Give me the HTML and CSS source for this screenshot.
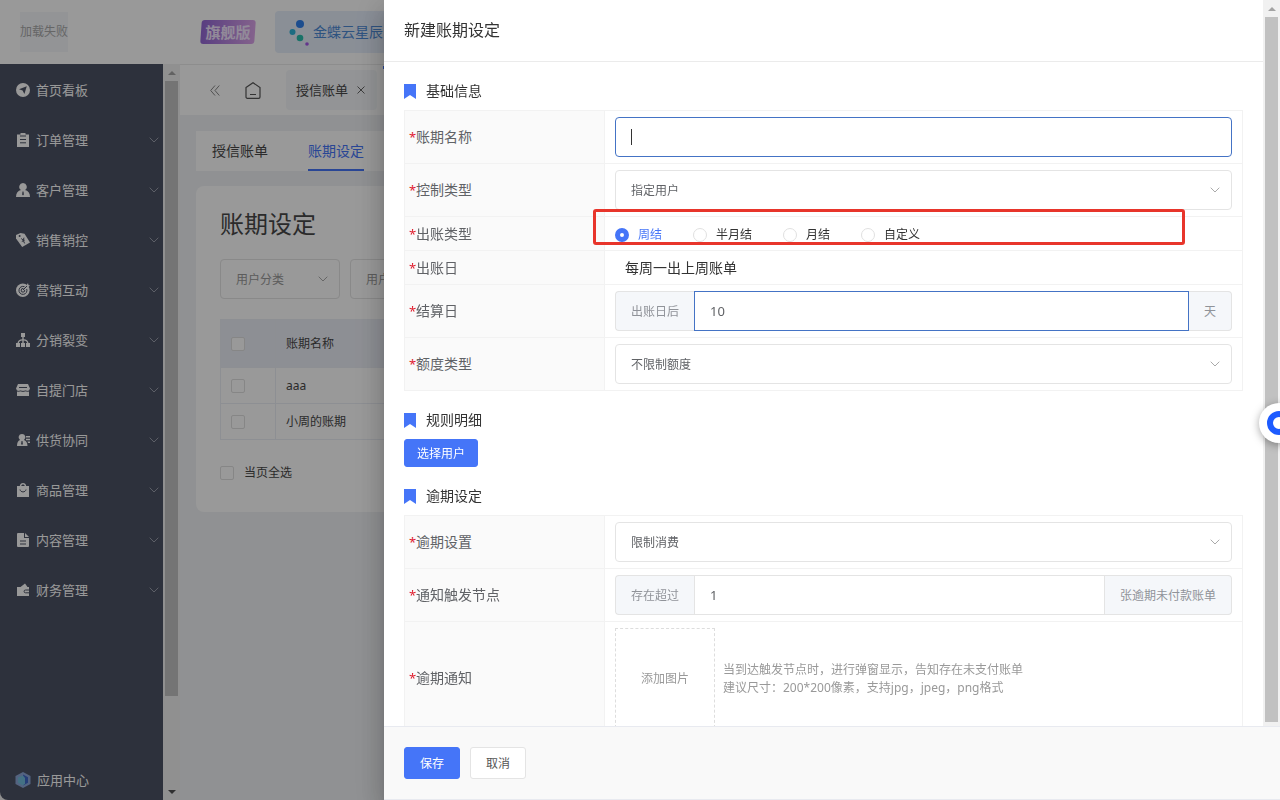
FILE: index.html
```
<!DOCTYPE html>
<html lang="zh-CN">
  <head>
    <meta charset="UTF-8" />
    <meta name="viewport" content="width=device-width, initial-scale=1.0" />
    <title>新建账期设定</title>
    <link rel="stylesheet" href="styles.css" />
  </head>
  <body>
    <svg class="sprite" aria-hidden="true">
      <symbol id="arrow" viewBox="0 0 10 6">
        <path d="M.7.7 5 5 9.3.7" fill="none" stroke="currentColor" />
      </symbol>
      <symbol id="bookmark" viewBox="0 0 12 15">
        <path d="M0 0h12v15l-6-4-6 4z" fill="#4575f8" />
      </symbol>
    </svg>

    <div class="app">
      <header class="topbar">
        <div class="logo">加载失败</div>
        <span class="edition"><b>旗舰版</b></span>
        <a class="kingdee" href="#">
          <svg width="20" height="27" viewBox="0 0 20 27">
            <circle cx="11" cy="5" r="4" fill="#2f80ed" />
            <circle cx="3.500" cy="13" r="3" fill="#2fb4d8" />
            <circle cx="11" cy="19" r="3.300" fill="#2bbfae" />
            <circle cx="18" cy="25" r="1.800" fill="#a65bea" />
          </svg>
          金蝶云星辰
        </a>
      </header>

      <div class="layout">
        <nav class="sidebar">
          <a href="#">
            <svg class="ico" viewBox="0 0 14 14"><circle cx="7" cy="7" r="7" /><path class="cut" d="M10.800 3.200 8.400 11 6.600 7.600 3 6.200z" /></svg>
            <span>首页看板</span>
          </a>
          <a href="#">
            <svg class="ico" viewBox="0 0 14 14"><path d="M1 1.500h3.500V0h5v1.500H13V14H1z" /><path class="line" d="M4 3h6M4 6.500h6M4 9.800h6" /></svg>
            <span>订单管理</span><svg class="more"><use href="#arrow" /></svg>
          </a>
          <a href="#">
            <svg class="ico" viewBox="0 0 14 14"><path d="M7 0a3.800 3.800 0 0 1 2 7c3 .8 5 3 5 7H0c0-4 2-6.200 5-7a3.800 3.800 0 0 1 2-7z" /><path class="cut" d="M6.500 8.500h1l.4 3L7 12.500l-.9-1z" /></svg>
            <span>客户管理</span><svg class="more"><use href="#arrow" /></svg>
          </a>
          <a href="#">
            <svg class="ico" viewBox="0 0 14 14"><path d="M0 2 4.500 0l4 .8L14 9.500 6.200 14 0 5.500z" /><circle class="cut" cx="3.600" cy="3" r="1" /><path class="line" d="m5.200 5.500 2 1.700.8-2.500M7.200 7.200l1.400 3.200M5.800 8.500l3-1.500" /></svg>
            <span>销售销控</span><svg class="more"><use href="#arrow" /></svg>
          </a>
          <a href="#">
            <svg class="ico" viewBox="0 0 14 14"><circle cx="6.800" cy="7.200" r="6.800" /><path d="m8 6 4-6 .5 2 1.500.5-4 4z" /><path class="line" d="M8.500 3.700A4 4 0 1 0 10.700 6M7.500 5.600a1.800 1.800 0 1 0 1.200 1.300M7 7l4-4" /></svg>
            <span>营销互动</span><svg class="more"><use href="#arrow" /></svg>
          </a>
          <a href="#">
            <svg class="ico" viewBox="0 0 14 14"><path d="M5 0h4v4H7.700v2.200c2.700.2 4.500 1.500 4.800 3.800H14v4h-4v-4h1.200c-.3-1.500-1.500-2.300-3.500-2.500V10H9v4H5v-4h1.300V7.500c-2 .2-3.200 1-3.500 2.500H4v4H0v-4h1.500c.3-2.300 2.100-3.600 4.800-3.800V4H5z" /></svg>
            <span>分销裂变</span><svg class="more"><use href="#arrow" /></svg>
          </a>
          <a href="#">
            <svg class="ico" viewBox="0 0 14 14"><path d="M2 1h10l2 4.500-1 2V13H1V7.500l-1-2z" /><path class="line" d="M3 4.500h8M1 8c2 1 3-.5 4 0s3 .5 4 0 2 1 4 0" /></svg>
            <span>自提门店</span><svg class="more"><use href="#arrow" /></svg>
          </a>
          <a href="#">
            <svg class="ico" viewBox="0 0 14 14"><path d="M6 1a3.300 3.300 0 0 1 2 6c2 .8 3.500 2.500 3.500 6H1c0-3.500 1-5.200 3-6a3.300 3.300 0 0 1 2-6zM10 3h4v1.400h-4zM10 5.800h4v1.400h-4zM11.500 8.600H14V10h-2z" /><path class="cut" d="M5.500 8h1l.4 3-.9 1-.9-1z" /></svg>
            <span>供货协同</span><svg class="more"><use href="#arrow" /></svg>
          </a>
          <a href="#">
            <svg class="ico" viewBox="0 0 14 14"><path d="M1 3h2.800C4 1.200 5.300 0 7 0s3 1.200 3.200 3H13v11H1zm4.200 0h3.600C8.600 2 8 1.400 7 1.400S5.400 2 5.200 3z" fill-rule="evenodd" /><path class="line" d="M4 6.500c.5 3.200 5.500 3.200 6 0" /></svg>
            <span>商品管理</span><svg class="more"><use href="#arrow" /></svg>
          </a>
          <a href="#">
            <svg class="ico" viewBox="0 0 14 14"><path d="M2 0h6v5h5v8a1 1 0 0 1-1 1H2a1 1 0 0 1-1-1V1a1 1 0 0 1 1-1zm7 0 4 4H9z" /><path class="line" d="M4 8h6M4 11h6" /></svg>
            <span>内容管理</span><svg class="more"><use href="#arrow" /></svg>
          </a>
          <a href="#">
            <svg class="ico" viewBox="0 0 14 14"><path d="M1 4h3.500L9 .5 11.500 4H13v9H1z" /><path class="line" d="M13 7H9.500a1.300 1.300 0 0 0 0 2.800H13" /></svg>
            <span>财务管理</span><svg class="more"><use href="#arrow" /></svg>
          </a>
          <a class="app-center" href="#">
            <svg width="16" height="16" viewBox="0 0 16 16">
              <path d="m8 0 7.500 4v8L8 16 .5 12V4z" fill="#8ca6d6" />
              <path d="m8 2.500 5 2.700v5.600l-5 2.700z" fill="#3f66c8" />
              <path d="m8 3.500-5 2v5.300l5 2.700 2-2V6z" fill="#72bcdc" />
            </svg>
            <span>应用中心</span>
          </a>
        </nav>

        <div class="scrollbar scrollbar-side">
          <i class="up"></i><i class="thumb"></i><i class="down"></i>
        </div>

        <main class="content">
          <div class="page-tabs">
            <svg class="collapse" width="10" height="11" viewBox="0 0 10 11"><path d="M5 .5.7 5.500 5 10.500M9.300.5 5 5.500l4.300 5" fill="none" stroke="#888" /></svg>
            <svg class="home" width="16" height="17" viewBox="0 0 16 17"><path d="M1 5.500 8 .7l7 4.800V15a1.300 1.300 0 0 1-1.300 1.300H2.300A1.300 1.300 0 0 1 1 15zM5 12.500h6" fill="none" stroke="#555" stroke-width="1.200" /></svg>
            <a class="page-tab" href="#">授信账单
              <svg width="8" height="8" viewBox="0 0 8 8"><path d="m.5.5 7 7m0-7-7 7" stroke="#666" /></svg>
            </a>
            <a class="page-tab current" href="#" aria-label="账期设定"></a>
          </div>

          <div class="sub-tabs">
            <a href="#">授信账单</a>
            <a class="active" href="#">账期设定</a>
          </div>

          <section class="card">
            <h1>账期设定</h1>
            <div class="filters">
              <div class="select">
                <select aria-label="用户分类"><option>用户分类</option></select>
                <svg class="caret-down"><use href="#arrow" /></svg>
              </div>
              <div class="select">
                <select aria-label="用户"><option>用户</option></select>
                <svg class="caret-down"><use href="#arrow" /></svg>
              </div>
            </div>
            <table>
              <thead>
                <tr><th class="check"><input type="checkbox" aria-label="全选" /></th><th>账期名称</th></tr>
              </thead>
              <tbody>
                <tr><td class="check"><input type="checkbox" aria-label="aaa" /></td><td>aaa</td></tr>
                <tr><td class="check"><input type="checkbox" aria-label="小周的账期" /></td><td>小周的账期</td></tr>
              </tbody>
            </table>
            <label class="check-all"><input type="checkbox" />当页全选</label>
          </section>
        </main>
      </div>
    </div>

    <div class="mask"></div>

    <form class="drawer">
      <div class="drawer-main">
        <div class="drawer-scroll">
          <h2 class="drawer-title">新建账期设定</h2>
          <div class="drawer-body">
            <h3><svg width="12" height="15"><use href="#bookmark" /></svg>基础信息</h3>
            <div class="form-table">
              <div class="row">
                <label class="name" for="name">账期名称</label>
                <div class="value">
                  <div class="focus-box"><input id="name" class="input focus" type="text" /><i class="cursor"></i></div>
                </div>
              </div>
              <div class="row">
                <label class="name" for="control">控制类型</label>
                <div class="value">
                  <div class="select">
                    <select id="control"><option>指定用户</option></select>
                    <svg class="caret-down"><use href="#arrow" /></svg>
                  </div>
                </div>
              </div>
              <div class="row short marked">
                <span class="name">出账类型</span>
                <div class="value radios">
                  <label><input type="radio" name="bill" checked /><span>周结</span></label>
                  <label><input type="radio" name="bill" /><span>半月结</span></label>
                  <label><input type="radio" name="bill" /><span>月结</span></label>
                  <label><input type="radio" name="bill" /><span>自定义</span></label>
                </div>
              </div>
              <div class="row short">
                <span class="name">出账日</span>
                <div class="value plain">每周一出上周账单</div>
              </div>
              <div class="row">
                <label class="name" for="settle">结算日</label>
                <div class="value group">
                  <span class="addon">出账日后</span>
                  <input id="settle" class="input focus" type="text" value="10" />
                  <span class="addon">天</span>
                </div>
              </div>
              <div class="row">
                <label class="name" for="quota">额度类型</label>
                <div class="value">
                  <div class="select">
                    <select id="quota"><option>不限制额度</option></select>
                    <svg class="caret-down"><use href="#arrow" /></svg>
                  </div>
                </div>
              </div>
            </div>

            <h3><svg width="12" height="15"><use href="#bookmark" /></svg>规则明细</h3>
            <button class="btn btn-primary btn-mini" type="button">选择用户</button>

            <h3><svg width="12" height="15"><use href="#bookmark" /></svg>逾期设定</h3>
            <div class="form-table">
              <div class="row">
                <label class="name" for="overdue">逾期设置</label>
                <div class="value">
                  <div class="select">
                    <select id="overdue"><option>限制消费</option></select>
                    <svg class="caret-down"><use href="#arrow" /></svg>
                  </div>
                </div>
              </div>
              <div class="row">
                <label class="name" for="trigger">通知触发节点</label>
                <div class="value group">
                  <span class="addon">存在超过</span>
                  <input id="trigger" class="input" type="text" value="1" />
                  <span class="addon">张逾期未付款账单</span>
                </div>
              </div>
              <div class="row">
                <span class="name">逾期通知</span>
                <div class="value notice">
                  <button class="upload" type="button">添加图片</button>
                  <p>当到达触发节点时，进行弹窗显示，告知存在未支付账单<br />建议尺寸：200*200像素，支持jpg，jpeg，png格式</p>
                </div>
              </div>
            </div>
          </div>
        </div>
        <div class="scrollbar scrollbar-drawer">
          <i class="up"></i><i class="thumb"></i>
        </div>
      </div>
      <footer class="drawer-footer">
        <button class="btn btn-primary" type="button">保存</button>
        <button class="btn" type="button">取消</button>
      </footer>
    </form>

    <button class="helper" type="button" aria-label="客服"></button>
  </body>
</html>
```
FILE: styles.css
```
*,
*::before,
*::after {
  box-sizing: border-box;
}

body {
  margin: 0;
  height: 100vh;
  overflow: hidden;
  background: #eee;
  color: #333;
  font: 12px/18px "Noto Sans", "Noto Sans CJK SC", sans-serif;
}

a {
  color: inherit;
  text-decoration: none;
}

h1,
h2,
h3,
p {
  margin: 0;
  font-weight: 400;
}

input,
select,
button {
  font: inherit;
  color: inherit;
}

.sprite {
  position: absolute;
  width: 0;
  height: 0;
}

.app {
  display: flex;
  flex-direction: column;
  height: 100vh;
  overflow: hidden;
  color: #484848;
}

/* top bar */
.topbar {
  display: flex;
  align-items: center;
  height: 64px;
  padding-left: 20px;
  background: #fff;
  flex: none;
}

.logo {
  width: 48px;
  line-height: 40px;
  background: #f5f7fa;
  color: #aaa;
  white-space: nowrap;
}

.edition {
  position: relative;
  width: 54px;
  margin: 0 20px 0 133px;
  color: #f3e6ff;
  font-size: 15px;
  line-height: 24px;
  text-align: center;
}

.edition::before {
  content: "";
  position: absolute;
  inset: 0;
  border-radius: 3px;
  background: linear-gradient(90deg, #9468d6, #dca4ea);
  transform: skewX(-4deg);
}

.edition b {
  position: relative;
}

.kingdee {
  display: flex;
  align-items: center;
  gap: 4px;
  height: 42px;
  padding: 0 14px;
  border-radius: 4px;
  background: #e6eefb;
  color: #4d8ad6;
  font-size: 14px;
}

.layout {
  display: flex;
  flex: 1;
  min-height: 0;
}

/* sidebar */
.sidebar {
  display: flex;
  flex-direction: column;
  width: 163px;
  padding-top: 1px;
  border-bottom-left-radius: 8px;
  background: #4c5264;
  color: #fff;
  font-size: 13px;
  flex: none;
}

.sidebar a {
  display: flex;
  align-items: center;
  gap: 6px;
  height: 50px;
  padding: 0 4px 0 16px;
}

.sidebar .app-center {
  height: 40px;
  margin-top: auto;
  padding-left: 15px;
}

.ico {
  width: 14px;
  height: 14px;
  fill: #fff;
}

.ico .cut {
  fill: #4c5264;
}

.ico .line {
  fill: none;
  stroke: #4c5264;
}

.more {
  width: 10px;
  height: 6px;
  margin-left: auto;
  color: #9a9eac;
}

/* scroll bars */
.scrollbar {
  display: flex;
  flex-direction: column;
  align-items: center;
  width: 17px;
  padding: 6px 0;
  background: #f1f1f1;
  flex: none;
}

.scrollbar .up,
.scrollbar .down {
  border: 4px solid transparent;
}

.scrollbar .up {
  border-top-width: 0;
  border-bottom-color: #a3a3a3;
  margin: 1px 0 6px;
}

.scrollbar .down {
  border-bottom-width: 0;
  border-top-color: #505050;
  margin-top: auto;
}

.scrollbar .thumb {
  width: 13px;
  background: #c1c1c1;
}

.scrollbar-side .thumb {
  height: 85%;
}

.scrollbar-drawer .thumb {
  flex: 1;
}

.scrollbar-drawer {
  padding-bottom: 4px;
}

/* page behind the drawer */
.content {
  flex: 1;
  min-width: 0;
  background: #f0f2f5;
}

.page-tabs {
  display: flex;
  align-items: center;
  height: 51px;
  padding-left: 30px;
  border-top: 1px solid #ebebeb;
  background: #fff;
}

.home {
  margin: 0 25px;
}

.page-tab {
  display: flex;
  align-items: center;
  gap: 9px;
  height: 40px;
  padding: 0 12px 0 10px;
  border-radius: 4px;
  background: #f5f7fa;
  font-size: 13px;
  white-space: nowrap;
}

.page-tab.current {
  width: 92px;
  height: 48px;
  margin-left: 6px;
  border-top: 3px solid #4575f8;
  border-radius: 0;
  background: #fff;
}

.sub-tabs {
  display: flex;
  gap: 40px;
  height: 40px;
  margin: 16px 16px 15px;
  padding-left: 16px;
  background: #fff;
  font-size: 14px;
  line-height: 40px;
}

.sub-tabs .active {
  border-bottom: 2px solid #4575f8;
  color: #4575f8;
}

.card {
  margin: 0 16px;
  padding: 20px 24px 30px;
  border-radius: 8px;
  background: #fff;
}

.card h1 {
  font-size: 24px;
  line-height: 36px;
}

.filters {
  display: flex;
  gap: 10px;
  margin: 17px 0 20px;
}

.filters .select {
  width: 120px;
  color: #999;
}

.card table {
  width: 100%;
  border: 1px solid #ebeef5;
  border-collapse: collapse;
}

.card th {
  height: 48px;
  background: #eceff7;
}

.card td {
  height: 36px;
}

.card th,
.card td {
  padding: 0 10px;
  border: 1px solid #ebeef5;
  font-weight: 400;
  text-align: left;
}

.card .check {
  width: 55px;
  line-height: 0;
}

input[type="checkbox"],
input[type="radio"] {
  appearance: none;
  width: 14px;
  height: 14px;
  margin: 0;
  border: 1px solid #e0e0e0;
  border-radius: 2px;
  background: #fff;
}

.check-all {
  display: flex;
  align-items: center;
  gap: 10px;
  margin-top: 24px;
}

/* shared fields */
.select {
  position: relative;
  color: #606266;
}

.select select {
  appearance: none;
  display: block;
  width: 100%;
  height: 40px;
  padding: 2px 30px 0 15px;
  border: 1px solid #e4e4e4;
  border-radius: 4px;
  background: #fff;
}

.caret-down {
  position: absolute;
  top: 17px;
  right: 12px;
  width: 10px;
  height: 6px;
  color: #aaa;
}

.input {
  width: 100%;
  height: 40px;
  padding: 0 15px;
  border: 1px solid #e4e4e4;
  border-radius: 4px;
  outline: none;
  background: #fff;
  color: #606266;
  font-size: 13px;
}

.input.focus {
  border-color: #4473c5;
}

/* drawer */
.mask {
  position: fixed;
  inset: 0;
  background: rgba(0, 0, 0, 0.4);
}

.drawer {
  position: fixed;
  top: 0;
  right: 0;
  bottom: 0;
  display: flex;
  flex-direction: column;
  width: 70%;
  background: #fff;
  box-shadow: 0 8px 10px -5px rgba(0, 0, 0, 0.2),
    0 16px 24px 2px rgba(0, 0, 0, 0.14), 0 6px 30px 5px rgba(0, 0, 0, 0.12);
}

.drawer-main {
  display: flex;
  flex: 1;
  min-height: 0;
}

.drawer-scroll {
  flex: 1;
  overflow: hidden;
}

.drawer-title {
  padding: 0 20px;
  border-bottom: 1px solid #ebebeb;
  font-size: 16px;
  line-height: 61px;
}

.drawer-body {
  padding: 20px;
}

.drawer-body h3 {
  display: flex;
  align-items: center;
  gap: 10px;
  margin: 20px 0 10px;
  font-size: 14px;
  line-height: 18px;
}

.drawer-body h3:first-child {
  margin-top: 0;
}

.form-table {
  border: 1px solid #f2f2f2;
  border-bottom: 0;
}

.row {
  position: relative;
  display: flex;
  border-bottom: 1px solid #f2f2f2;
}

.row.short {
  height: 34px;
}

.name {
  display: flex;
  align-items: center;
  width: 200px;
  padding-left: 4px;
  border-right: 1px solid #f2f2f2;
  background: #fafafa;
  color: #606266;
  font-size: 14px;
  flex: none;
}

.name::before {
  content: "*";
  width: 7px;
  color: #e02030;
  font-size: 13px;
}

.value {
  flex: 1;
  min-width: 0;
  padding: 6px 10px;
}

.focus-box {
  position: relative;
}

.focus-box .input {
  display: block;
}

.cursor {
  position: absolute;
  top: 12px;
  left: 16px;
  width: 1px;
  height: 16px;
  background: #333;
}

.radios {
  display: flex;
  align-items: center;
  gap: 31px;
  padding: 8px 10px 5px;
}

.radios label {
  display: flex;
  align-items: center;
  gap: 9px;
}

.radios input[type="radio"] {
  border-radius: 50%;
}

.radios input:checked {
  border: 5px solid #4575f8;
}

.radios input:checked + span {
  color: #4575f8;
}

/* red frame over the bill type row */
.marked::after {
  content: "";
  position: absolute;
  z-index: 1;
  inset: -8px 57px 5px 188px;
  border: 3px solid #e8352b;
  border-radius: 3px;
}

.plain {
  padding-left: 20px;
  font-size: 14px;
  line-height: 22px;
}

.group {
  display: flex;
}

.group .input {
  flex: 1;
  min-width: 0;
  border-radius: 0;
}

.addon {
  padding: 1px 15px 0;
  border: 1px solid #e4e4e4;
  background: #f5f7fa;
  color: #909399;
  line-height: 37px;
}

.addon:first-child {
  border-right: 0;
  border-radius: 4px 0 0 4px;
}

.addon:last-child {
  border-left: 0;
  border-radius: 0 4px 4px 0;
}

.notice {
  display: flex;
  align-items: center;
  gap: 8px;
  color: #999;
}

.notice p {
  padding-top: 2px;
}

.upload {
  width: 100px;
  height: 100px;
  padding: 2px 0 0;
  border: 1px dashed #ddd;
  background: #fff;
}

.btn {
  width: 56px;
  height: 32px;
  padding: 2px 0 0;
  border: 1px solid #e4e4e4;
  border-radius: 3px;
  background: #fff;
  color: #555;
}

.btn-primary {
  border-color: #4575f8;
  background: #4575f8;
  color: #fff;
}

.btn-mini {
  display: block;
  width: 74px;
  height: 28px;
}

.drawer-footer {
  display: flex;
  gap: 10px;
  padding: 20px;
  border: 1px solid #e8eaf0;
  border-width: 1px 0;
  background: #f9f9f9;
}

.helper {
  position: fixed;
  top: 403px;
  right: -19px;
  width: 40px;
  height: 40px;
  padding: 8px;
  border: 0;
  border-radius: 50%;
  background: #fff;
  box-shadow: 0 2px 8px rgba(0, 0, 0, 0.35);
}

.helper::before {
  content: "";
  display: block;
  height: 24px;
  border: 6px solid #1d5bff;
  border-radius: 50%;
}
```
